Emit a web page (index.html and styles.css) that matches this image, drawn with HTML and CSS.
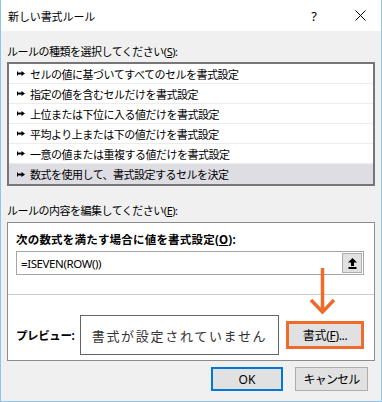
FILE: index.html
```html
<!DOCTYPE html>
<html lang="ja">
<head>
<meta charset="utf-8">
<title>新しい書式ルール</title>
<link rel="stylesheet" href="styles.css">
</head>
<body>
<div class="window">
  <div class="titlebar">
    <span class="title">新しい書式ルール</span>
    <span class="help">?</span>
    <span class="close"><svg width="11" height="11" viewBox="0 0 11 11"><path d="M0.5 0.5 L10.5 10.5 M10.5 0.5 L0.5 10.5" stroke="#000" stroke-width="1" fill="none"/></svg></span>
  </div>
  <div class="body">
    <div class="label l1">ルールの種類を選択してください(<u>S</u>):</div>
    <ul class="rules">
      <li class="rule"><svg class="bullet" width="8" height="5" viewBox="0 0 8 5"><path d="M0 0.5h1v4H0z M1 1.5h4v2H1z M4.5 0 L8 2.5 L4.5 5z" fill="#000"/></svg><span>セルの値に基づいてすべてのセルを書式設定</span></li>
      <li class="rule"><svg class="bullet" width="8" height="5" viewBox="0 0 8 5"><path d="M0 0.5h1v4H0z M1 1.5h4v2H1z M4.5 0 L8 2.5 L4.5 5z" fill="#000"/></svg><span>指定の値を含むセルだけを書式設定</span></li>
      <li class="rule"><svg class="bullet" width="8" height="5" viewBox="0 0 8 5"><path d="M0 0.5h1v4H0z M1 1.5h4v2H1z M4.5 0 L8 2.5 L4.5 5z" fill="#000"/></svg><span>上位または下位に入る値だけを書式設定</span></li>
      <li class="rule"><svg class="bullet" width="8" height="5" viewBox="0 0 8 5"><path d="M0 0.5h1v4H0z M1 1.5h4v2H1z M4.5 0 L8 2.5 L4.5 5z" fill="#000"/></svg><span>平均より上または下の値だけを書式設定</span></li>
      <li class="rule"><svg class="bullet" width="8" height="5" viewBox="0 0 8 5"><path d="M0 0.5h1v4H0z M1 1.5h4v2H1z M4.5 0 L8 2.5 L4.5 5z" fill="#000"/></svg><span>一意の値または重複する値だけを書式設定</span></li>
      <li class="rule selected"><svg class="bullet" width="8" height="5" viewBox="0 0 8 5"><path d="M0 0.5h1v4H0z M1 1.5h4v2H1z M4.5 0 L8 2.5 L4.5 5z" fill="#000"/></svg><span>数式を使用して、書式設定するセルを決定</span></li>
    </ul>
    <div class="label l2">ルールの内容を編集してください(<u>E</u>):</div>
    <div class="editor">
      <div class="formula-label">次の数式を満たす場合に値を書式設定(<u>O</u>):</div>
      <div class="formula">
        <span class="formula-text">=ISEVEN(ROW())</span>
        <span class="collapse"><svg width="9" height="11" viewBox="0 0 9 11"><path d="M4.5 0 L9 4.5 L6 4.5 L6 8 L3 8 L3 4.5 L0 4.5z M0.5 9h8v2h-8z" fill="#000"/></svg></span>
      </div>
      <div class="sep"></div>
      <div class="preview-row">
        <span class="preview-label">プレビュー:</span>
        <div class="preview">書式が設定されていません</div>
        <div class="highlight"><span class="fmt-btn">書式(<u>F</u>)...</span></div>
      </div>
      <svg class="arrow" width="30" height="48" viewBox="0 0 30 48"><path d="M14.5 0 V44 M3 32 L14.5 44 L26 32" stroke="#ee6b2c" stroke-width="3.5" fill="none"/></svg>
    </div>
    <div class="footer">
      <span class="btn ok">OK</span>
      <span class="btn cancel">キャンセル</span>
    </div>
  </div>
</div>
</body>
</html>
```
FILE: styles.css
```css
html, body {
  margin: 0;
  padding: 0;
  background: #f0f0f0;
}
body {
  font-family: "Noto Sans", "Noto Sans CJK JP", sans-serif;
  font-size: 11px;
  color: #000;
}
.window {
  width: 382px;
  height: 402px;
  box-sizing: border-box;
  border: 1px solid #8cc3ef;
  border-top: none;
  background: #f0f0f0;
  display: flex;
  flex-direction: column;
}
.titlebar {
  height: 31px;
  flex: none;
  background: #fff;
  display: flex;
  align-items: center;
  padding: 0 15px 0 7px;
}
.title {
  font-size: 11px;
  letter-spacing: -0.1px;
}
.help {
  margin-left: auto;
  width: 12px;
  text-align: center;
  font-family: "Noto Sans", sans-serif;
  font-size: 13px;
  line-height: 16px;
}
.close {
  margin-left: 34px;
  width: 12px;
  height: 12px;
  display: flex;
  align-items: center;
  justify-content: center;
}
.body {
  padding: 0 6px;
}
.label {
  line-height: 20px;
  font-size: 11px;
  letter-spacing: -0.5px;
}
.l1 {
  padding-top: 11px;
}
.l2 {
  padding-top: 15px;
  padding-bottom: 1px;
}
.rules {
  list-style: none;
  margin: 0;
  padding: 0;
  border: 2px solid #767676;
  background: #fff;
}
.rule {
  height: 20px;
  box-sizing: border-box;
  border-bottom: 1px solid #ececec;
  display: flex;
  align-items: center;
  padding-left: 8px;
  font-size: 11px;
  letter-spacing: -0.5px;
  white-space: nowrap;
}
.rule.selected {
  background: #dddde3;
  border-bottom: none;
}
.bullet {
  flex: none;
  margin-right: 5px;
}
.editor {
  position: relative;
  border: 1px solid #8c8c8c;
  background: #fff;
  padding: 0 10px 5px 8px;
}
.formula-label {
  padding-top: 7px;
  line-height: 20px;
  font-weight: bold;
  font-size: 11.5px;
  letter-spacing: 0.2px;
  white-space: nowrap;
}
.formula {
  margin-top: 1px;
  height: 24px;
  box-sizing: border-box;
  border: 1px solid #a6a6a6;
  display: flex;
  align-items: center;
}
.formula-text {
  padding-left: 4px;
  font-size: 11.5px;
  letter-spacing: -0.4px;
}
.collapse {
  margin-left: auto;
  margin-right: 1px;
  width: 20px;
  height: 20px;
  box-sizing: border-box;
  background: #e1e1e1;
  border: 1px solid #adadad;
  display: flex;
  align-items: center;
  justify-content: center;
}
.sep {
  margin: 19px -10px 0 -8px;
  height: 1px;
  background: #cdcdcd;
}
.preview-row {
  display: flex;
  align-items: center;
  margin-top: 20px;
}
.preview-label {
  width: 64px;
  font-weight: bold;
  font-size: 11.5px;
  letter-spacing: -0.4px;
}
.preview {
  width: 200px;
  height: 40px;
  box-sizing: border-box;
  border: 1px solid #646464;
  display: flex;
  align-items: center;
  justify-content: center;
  font-size: 13px;
  letter-spacing: 1.7px;
  color: #333;
}
.highlight {
  margin-left: 7px;
  width: 78px;
  height: 28px;
  box-sizing: border-box;
  border: 3px solid #ee6b2c;
  display: flex;
}
.fmt-btn {
  flex: 1;
  background: #e1e1e1;
  display: flex;
  align-items: center;
  justify-content: center;
  font-size: 12px;
  letter-spacing: -0.3px;
}
.arrow {
  position: absolute;
  left: 300px;
  top: 45px;
}
.footer {
  display: flex;
  justify-content: flex-end;
  gap: 12px;
  padding-top: 6px;
  padding-right: 7px;
}
.btn {
  height: 24px;
  box-sizing: border-box;
  background: #e1e1e1;
  display: flex;
  align-items: center;
  justify-content: center;
  font-size: 12px;
}
.ok {
  width: 72px;
  border: 2px solid #0078d7;
}
.cancel {
  width: 73px;
  border: 1px solid #adadad;
  letter-spacing: -0.8px;
}
```
